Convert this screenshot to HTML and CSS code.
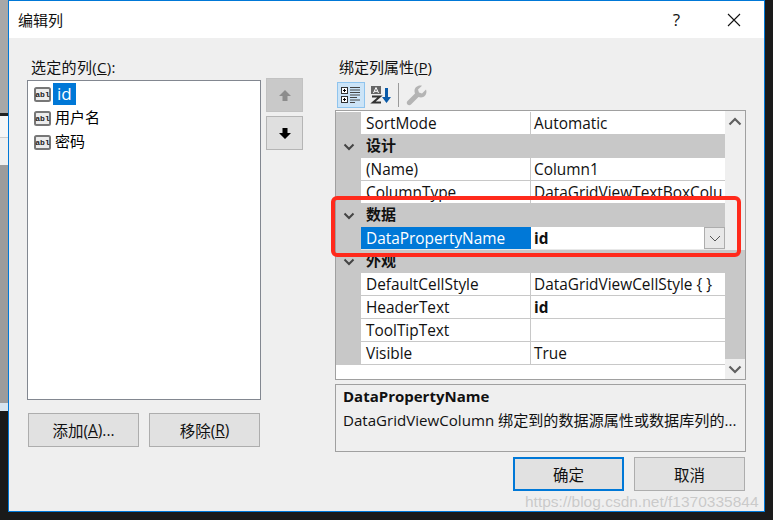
FILE: index.html
```html
<!DOCTYPE html>
<html lang="zh-CN">
<head>
<meta charset="utf-8">
<title>编辑列</title>
<link rel="stylesheet" href="styles.css">
</head>
<body>
<div class="desktop">
  <div class="strip">
    <div class="seg seg-a"></div>
    <div class="seg seg-b"></div>
    <div class="seg seg-c"></div>
    <div class="seg seg-d"></div>
    <div class="seg seg-e"></div>
    <div class="seg seg-f"></div>
  </div>
  <div class="window">
    <header class="titlebar">
      <span class="title">编辑列</span>
      <span class="help">?</span>
      <svg class="close" width="14" height="14" viewBox="0 0 14 14"><path d="M1 1 13 13M13 1 1 13" stroke="#111" stroke-width="1.1" fill="none"/></svg>
    </header>
    <div class="body">
      <section class="left">
        <div class="label left-label">选定的列(<u>C</u>):</div>
        <div class="list-row">
          <div class="list">
            <div class="item"><svg class="abl" width="17" height="15" viewBox="0 0 17 15"><rect x="1" y="1" width="15" height="13" rx="1.5" fill="#ececec" stroke="#777" stroke-width="2"/><text x="8.5" y="10.300" text-anchor="middle" class="abl-text">abl</text></svg><span class="item-text selected">id</span></div>
            <div class="item"><svg class="abl" width="17" height="15" viewBox="0 0 17 15"><rect x="1" y="1" width="15" height="13" rx="1.5" fill="#ececec" stroke="#777" stroke-width="2"/><text x="8.5" y="10.300" text-anchor="middle" class="abl-text">abl</text></svg><span class="item-text">用户名</span></div>
            <div class="item"><svg class="abl" width="17" height="15" viewBox="0 0 17 15"><rect x="1" y="1" width="15" height="13" rx="1.5" fill="#ececec" stroke="#777" stroke-width="2"/><text x="8.5" y="10.300" text-anchor="middle" class="abl-text">abl</text></svg><span class="item-text">密码</span></div>
          </div>
          <div class="arrows">
            <div class="arrow-btn disabled"><svg width="14" height="13" viewBox="0 0 14 13"><path d="M7 1 13 7H9.500V12H4.500V7H1Z" fill="#8c8c8c"/></svg></div>
            <div class="arrow-btn"><svg width="14" height="13" viewBox="0 0 14 13"><path d="M7 12 13 6H9.500V1H4.500V6H1Z" fill="#000"/></svg></div>
          </div>
        </div>
        <div class="btn-row left-btns">
          <div class="btn">添加(<u>A</u>)...</div>
          <div class="btn">移除(<u>R</u>)</div>
        </div>
      </section>
      <section class="right">
        <div class="label right-label">绑定列属性(<u>P</u>)</div>
        <div class="toolbar">
          <div class="tool active">
            <svg width="20" height="18" viewBox="0 0 20 18"><g fill="none" stroke="#333"><rect x=".5" y="1.500" width="6" height="6" fill="#fff"/><rect x=".5" y="10.500" width="6" height="6" fill="#fff"/></g><path d="M2 4.500h3M3.500 3v3M2 13.500h3M3.500 12v3" stroke="#000"/><path d="M9 1.500h10M9 4h10M9 6.500h10M9 9h10M9 11.500h7M9 14h10M9 16.500h5" stroke="#444" stroke-width="1"/></svg>
          </div>
          <div class="tool sort">
            <svg width="22" height="20" viewBox="0 0 22 20"><rect x="1" y="1" width="10" height="8" fill="#666"/><path d="M3.500 8 6 2.500 8.500 8M4.300 6.300h3.400" stroke="#fff" fill="none"/><path d="M2 11.500h8L3 17.500h8" stroke="#333" stroke-width="2" fill="none"/><path d="M15 3h3v9h3l-4.500 6L12 12h3Z" fill="#0a5aa8"/></svg>
          </div>
          <div class="tool-sep"></div>
          <div class="tool wrench">
            <svg width="21" height="21" viewBox="0 0 21 21"><path d="M20 4.500 16 8.500 13 7.500 12 4.500 16 .8C12.500-.5 8.500 2 8.500 6c0 1 .2 1.800.5 2.500L1.500 16c-1 1-1 2.500 0 3.500s2.500 1 3.500 0l7.500-7.500c.8.300 1.500.5 2.500.5 4 0 6.500-4 5-8Z" fill="#b4b4b4"/></svg>
          </div>
        </div>
        <div class="grid">
          <div class="rows">
            <div class="row"><span class="gutter"></span><span class="name">SortMode</span><span class="value">Automatic</span></div>
            <div class="row cat"><span class="gutter"><svg class="chev" width="12" height="8" viewBox="0 0 12 8"><path d="M1.500 1.500 6 6l4.500-4.500" stroke="#444" stroke-width="2" fill="none"/></svg></span><span class="cat-name">设计</span></div>
            <div class="row"><span class="gutter"></span><span class="name">(Name)</span><span class="value">Column1</span></div>
            <div class="row"><span class="gutter"></span><span class="name">ColumnType</span><span class="value">DataGridViewTextBoxColu</span></div>
            <div class="row cat"><span class="gutter"><svg class="chev" width="12" height="8" viewBox="0 0 12 8"><path d="M1.500 1.500 6 6l4.500-4.500" stroke="#444" stroke-width="2" fill="none"/></svg></span><span class="cat-name">数据</span></div>
            <div class="row current"><span class="gutter"></span><span class="name sel">DataPropertyName</span><span class="value bold">id</span><span class="drop"><svg width="12" height="7" viewBox="0 0 12 7"><path d="M1 1 6 6 11 1" stroke="#555" stroke-width="1" fill="none"/></svg></span></div>
            <div class="row cat"><span class="gutter"><svg class="chev" width="12" height="8" viewBox="0 0 12 8"><path d="M1.500 1.500 6 6l4.500-4.500" stroke="#444" stroke-width="2" fill="none"/></svg></span><span class="cat-name">外观</span></div>
            <div class="row"><span class="gutter"></span><span class="name">DefaultCellStyle</span><span class="value">DataGridViewCellStyle { }</span></div>
            <div class="row"><span class="gutter"></span><span class="name">HeaderText</span><span class="value bold">id</span></div>
            <div class="row"><span class="gutter"></span><span class="name">ToolTipText</span><span class="value"></span></div>
            <div class="row"><span class="gutter"></span><span class="name">Visible</span><span class="value">True</span></div>
          </div>
          <div class="scrollbar">
            <div class="sb-arrow"><svg width="14" height="9" viewBox="0 0 14 9"><path d="M1.500 7.500 7 2l5.500 5.500" stroke="#606060" stroke-width="2.200" fill="none"/></svg></div>
            <div class="sb-space"></div>
            <div class="sb-thumb"></div>
            <div class="sb-arrow"><svg width="14" height="9" viewBox="0 0 14 9"><path d="M1.500 1.500 7 7l5.500-5.500" stroke="#606060" stroke-width="2.200" fill="none"/></svg></div>
          </div>
        </div>
        <div class="desc">
          <div class="desc-title">DataPropertyName</div>
          <div class="desc-text">DataGridViewColumn 绑定到的数据源属性或数据库列的...</div>
        </div>
        <div class="btn-row right-btns">
          <div class="btn primary">确定</div>
          <div class="btn">取消</div>
        </div>
      </section>
    </div>
    <div class="highlight"></div>
    <div class="watermark">https://blog.csdn.net/f1370335844</div>
  </div>
</div>
</body>
</html>
```

FILE: styles.css
```css
* { box-sizing: border-box; }
html, body { margin: 0; padding: 0; }
body {
  width: 773px;
  height: 520px;
  overflow: hidden;
  background: #1a1a1a;
  font-family: "Open Sans", "Noto Sans CJK SC", sans-serif;
  font-size: 15px;
  color: #000;
}
.desktop { display: flex; align-items: flex-start; }
.strip { width: 8px; display: flex; flex-direction: column; }
.seg-a { height: 113px; background: #a8a8a8; }
.seg-b { height: 3px; background: #222; }
.seg-c { height: 22px; background: #f6f6f6; border-bottom: 1px solid #ccc; }
.seg-d { height: 27px; background: #f0f0f0; }
.seg-e { height: 238px; background: #9c9c9c; }
.seg-f { height: 8px; background: #d6e4ef; }

.window {
  position: relative;
  width: 757px;
  height: 512px;
  border: 1px solid #0078d7;
  background: #efefef;
  overflow: hidden;
}
.titlebar {
  height: 37px;
  background: #fff;
  display: flex;
  align-items: center;
  padding: 0 23px 0 9px;
  color: #111;
}
.title { flex: 1; font-size: 15px; }
.help { font-size: 17px; margin-right: 47px; }

.body { display: flex; padding: 0 0 0 18px; }
.left { width: 276px; margin-right: 32px; }
.label { height: 42px; padding-top: 20px; line-height: 19px; color: #111; }
.left-label { padding-left: 4px; letter-spacing: 0.3px; }
.right-label { padding-left: 4px; height: 44px; }
.list-row { display: flex; gap: 5px; align-items: flex-start; height: 335px; margin-top: -2px; }
.list {
  width: 234px;
  height: 320px;
  margin-top: 2px;
  background: #fff;
  border: 1px solid #828790;
  padding: 1px 0 0 6px;
}
.item { height: 24px; display: flex; align-items: center; gap: 2px; }
.item-text { padding: 0 2px; line-height: 20px; height: 22px; }
.item-text.selected { background: #0078d7; color: #fff; padding: 0 4px; font-size: 17px; line-height: 22px; }
.abl { flex: none; }
.abl-text { font: bold 8px "Liberation Mono", monospace; fill: #222; }
.arrows { display: flex; flex-direction: column; gap: 4px; }
.arrow-btn {
  width: 37px;
  height: 34px;
  background: #dfdfdf;
  border: 1px solid #b5b5b5;
  display: flex;
  align-items: center;
  justify-content: center;
}
.arrow-btn.disabled { background: #c9c9c9; border-color: #c2c2c2; }

.btn-row { display: flex; gap: 10px; }
.left-btns { padding-left: 1px; }
.right-btns { padding-left: 178px; margin-top: 5px; }
.btn {
  width: 111px;
  height: 34px;
  background: #e1e1e1;
  border: 1px solid #adadad;
  display: flex;
  align-items: center;
  justify-content: center;
  color: #111;
  white-space: pre;
  font-size: 15.5px;
}
.btn.primary { border: 2px solid #0078d7; }

.right { width: 411px; }
.toolbar { height: 26px; display: flex; align-items: center; padding-left: 2px; margin-bottom: 2px; }
.tool { display: flex; align-items: center; justify-content: center; }
.tool.active { width: 28px; height: 26px; background: #cce4f7; border: 1px solid #8fc4ee; }
.tool.sort { width: 22px; margin-left: 5px; }
.tool-sep { width: 1px; height: 24px; background: #9a9a9a; margin: 0 7px 0 6px; }

.grid {
  height: 270px;
  display: flex;
  border: 1px solid #a0a0a0;
  background: #fff;
}
.rows { width: 389px; padding-top: 1px; }
.row { display: flex; height: 23px; line-height: 23px; color: #111; border-bottom: 1px solid #c8c8c8; font-size: 15.4px; }
.gutter { width: 25px; background: #c8c8c8; flex: none; display: flex; align-items: center; justify-content: center; margin-bottom: -1px; }
.name { width: 170px; padding-left: 5px; border-right: 1px solid #c8c8c8; flex: none; margin-bottom: -1px; }
.value { flex: 1; padding-left: 3px; white-space: nowrap; overflow: hidden; }
.bold { font-weight: 700; }
.cat { background: #c8c8c8; border-bottom: 0; line-height: 20px; font-size: 15px; }
.cat-name { padding-left: 5px; font-weight: 700; }
.current { background: #fff; border-bottom-color: #e8e8e8; }
.sel { background: #0078d7; color: #fff; border-right: 0; margin-bottom: 0; width: 170px; }
.drop {
  width: 21px;
  height: 22px;
  background: #e8e8e8;
  border: 1px solid #adadad;
  display: flex;
  align-items: center;
  justify-content: center;
  flex: none;
}
.scrollbar { width: 20px; display: flex; flex-direction: column; background: #efefef; }
.sb-arrow { height: 20px; display: flex; align-items: center; justify-content: center; flex: none; }
.sb-space { height: 119px; flex: none; }
.sb-thumb { height: 109px; background: #c8c8c8; flex: none; }

.desc {
  height: 68px;
  margin-top: 4px;
  border: 1px solid #a0a0a0;
  padding: 0 7px;
}
.desc-title { font-weight: 700; line-height: 22px; color: #111; }
.desc-text { line-height: 20px; margin-top: 3px; white-space: nowrap; color: #111; font-size: 15.1px; }

.highlight {
  position: absolute;
  left: 322px;
  top: 195px;
  width: 410px;
  height: 61px;
  border: 4px solid #ff2a1c;
  border-radius: 6px;
}
.watermark {
  position: absolute;
  left: 516px;
  top: 491px;
  font-family: "Liberation Sans", sans-serif;
  font-size: 15.5px;
  line-height: 20px;
  white-space: nowrap;
  color: rgba(170, 170, 170, 0.55);
}
```
